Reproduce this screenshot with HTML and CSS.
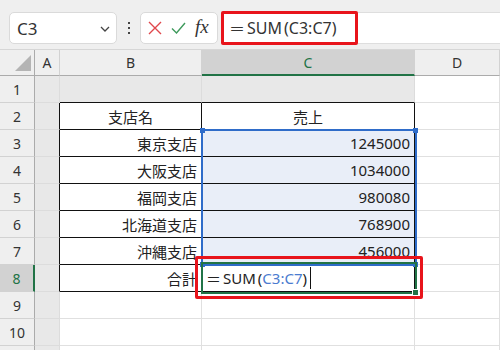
FILE: index.html
```html
<!DOCTYPE html>
<html lang="ja">

<head>
    <meta charset="UTF-8">
    <title>SUM関数</title>
    <link rel="stylesheet" href="styles.css">
</head>

<body>
    <div class="topbar">
        <div class="namebox">
            <span>C3</span>
            <svg class="chevron" width="10" height="6" viewBox="0 0 10 6"><path d="M1 1 L5 5 L9 1" fill="none" stroke="#444" stroke-width="1.3"/></svg>
        </div>
        <div class="dots"><i></i><i></i><i></i></div>
        <div class="fxbox">
            <svg width="14" height="14" viewBox="0 0 14 14"><path d="M1 1 L13 13 M13 1 L1 13" stroke="#e0474c" stroke-width="1.4"/></svg>
            <svg width="15" height="12" viewBox="0 0 15 12"><path d="M1 6.5 L5.5 11 L14 1" fill="none" stroke="#3e9a5c" stroke-width="1.4"/></svg>
            <span class="fx">fx</span>
        </div>
        <div class="formula">
            <span class="formula-text"><span class="eq">＝</span>SUM<span class="paren">(</span>C3:C7)</span>
        </div>
    </div>

    <div class="sheet">
        <div class="ch corner"><span class="tri"></span></div>
        <div class="ch">A</div>
        <div class="ch">B</div>
        <div class="ch active">C</div>
        <div class="ch">D</div>

        <div class="rh">1</div>
        <div class="cell shade"></div>
        <div class="cell shade top-edge"></div>
        <div class="cell shade top-edge"></div>
        <div class="cell"></div>

        <div class="rh">2</div>
        <div class="cell shade left-edge"></div>
        <div class="cell tb center">支店名</div>
        <div class="cell tb center">売上</div>
        <div class="cell"></div>

        <div class="rh">3</div>
        <div class="cell shade left-edge"></div>
        <div class="cell tb right">東京支店</div>
        <div class="cell tb sel right">1245000</div>
        <div class="cell"></div>

        <div class="rh">4</div>
        <div class="cell shade left-edge"></div>
        <div class="cell tb right">大阪支店</div>
        <div class="cell tb sel right">1034000</div>
        <div class="cell"></div>

        <div class="rh">5</div>
        <div class="cell shade left-edge"></div>
        <div class="cell tb right">福岡支店</div>
        <div class="cell tb sel right">980080</div>
        <div class="cell"></div>

        <div class="rh">6</div>
        <div class="cell shade left-edge"></div>
        <div class="cell tb right">北海道支店</div>
        <div class="cell tb sel right">768900</div>
        <div class="cell"></div>

        <div class="rh">7</div>
        <div class="cell shade left-edge"></div>
        <div class="cell tb right">沖縄支店</div>
        <div class="cell tb sel right">456000</div>
        <div class="cell"></div>

        <div class="rh active">8</div>
        <div class="cell shade left-edge"></div>
        <div class="cell tb right">合計</div>
        <div class="cell tb editing"><span class="eq">＝</span>SUM<span class="paren">(</span><span class="ref">C3:C7</span>)<span class="caret"></span></div>
        <div class="cell"></div>

        <div class="rh">9</div>
        <div class="cell shade"></div>
        <div class="cell"></div>
        <div class="cell"></div>
        <div class="cell"></div>

        <div class="rh">10</div>
        <div class="cell shade"></div>
        <div class="cell"></div>
        <div class="cell"></div>
        <div class="cell"></div>

        <div class="rh"></div>
        <div class="cell shade"></div>
        <div class="cell"></div>
        <div class="cell"></div>
        <div class="cell"></div>

        <!-- range highlight, active cell and callout drawn over the grid -->
        <div class="range"></div>
        <div class="handle blue h1"></div>
        <div class="handle blue h2"></div>
        <div class="handle blue h3"></div>
        <div class="handle blue h4"></div>
        <div class="activecell"></div>
        <div class="handle green h5"></div>
        <div class="callout"></div>
    </div>
</body>

</html>
```

FILE: styles.css
```css
body {
    margin: 0;
    width: 500px;
    height: 350px;
    overflow: hidden;
    background-color: #fff;
    font-family: "Noto Sans", "Noto Sans CJK JP", sans-serif;
    color: #222;
}

.topbar {
    height: 50px;
    background-color: #efefef;
    border-bottom: 1px solid #d6d6d6;
    display: flex;
    align-items: flex-start;
    padding-top: 12px;
    box-sizing: border-box;
}

.namebox {
    margin-left: 9px;
    width: 108px;
    height: 32px;
    box-sizing: border-box;
    background-color: #fff;
    border: 1px solid #dadada;
    border-radius: 5px;
    display: flex;
    align-items: center;
    justify-content: space-between;
    padding: 0 6px 0 7px;
    font-size: 17px;
    color: #333;
}

.chevron {
    margin-top: 1px;
}

.dots {
    width: 23px;
    height: 32px;
    display: flex;
    flex-direction: column;
    align-items: center;
    justify-content: center;
    gap: 3px;
}

.dots i {
    width: 2px;
    height: 2px;
    background-color: #444;
}

.fxbox {
    width: 78px;
    height: 32px;
    box-sizing: border-box;
    background-color: #fff;
    border: 1px solid #dadada;
    border-radius: 5px;
    display: flex;
    align-items: center;
    gap: 9px;
    padding-left: 7px;
}

.fx {
    font-family: "Liberation Serif", serif;
    font-style: italic;
    font-size: 19px;
    color: #333;
    margin-top: -3px;
}

.formula {
    flex: 1;
    margin-left: 3px;
    height: 32px;
    background-color: #fff;
    border-top: 1px solid #dedede;
    border-bottom: 1px solid #dedede;
    box-sizing: border-box;
}

.formula-text {
    display: flex;
    align-items: center;
    width: 137px;
    height: 34px;
    margin-top: -2px;
    box-sizing: border-box;
    border: 3px solid #e8141b;
    border-radius: 2px;
    padding-left: 5px;
    font-size: 16px;
    color: #333;
}

.eq {
    font-family: "Noto Sans CJK JP", sans-serif;
    margin-right: 2px;
}

.paren {
    margin-left: 2px;
}

.sheet {
    position: relative;
    display: grid;
    grid-template-columns: 35px 25px 142px 213px 85px;
    grid-template-rows: 26px repeat(11, 27px);
}

.sheet > div {
    box-sizing: border-box;
}

.ch {
    background-color: #efefef;
    border-right: 1px solid #d2d2d2;
    border-bottom: 1px solid #ababab;
    display: flex;
    align-items: center;
    justify-content: center;
    font-size: 14px;
    color: #333;
}

.ch.active {
    background-color: #d2d2d2;
    border-bottom: 2px solid #217346;
    color: #217346;
}

.corner {
    position: relative;
    border-right: 1px solid #ababab;
}

.tri {
    position: absolute;
    right: 3px;
    bottom: 4px;
    width: 0;
    height: 0;
    border-left: 16px solid transparent;
    border-bottom: 16px solid #b4b4b4;
}

.rh {
    background-color: #efefef;
    border-right: 1px solid #ababab;
    border-bottom: 1px solid #d2d2d2;
    display: flex;
    align-items: center;
    justify-content: center;
    font-size: 14px;
    color: #333;
}

.rh.active {
    background-color: #d2d2d2;
    border-right: 2px solid #217346;
    color: #217346;
}

.cell {
    border-right: 1px solid #e0e0e0;
    border-bottom: 1px solid #e0e0e0;
    display: flex;
    align-items: center;
    padding: 0 4px;
    font-size: 15px;
    white-space: nowrap;
}

.shade {
    background-color: #e8e8e8;
    border-color: #dcdcdc;
}

.top-edge {
    border-bottom-color: #111;
}

.left-edge {
    border-right-color: #111;
}

.tb {
    border-right-color: #111;
    border-bottom-color: #111;
}

.center {
    justify-content: center;
}

.right {
    justify-content: flex-end;
}

.sel {
    background-color: #e9eef8;
}

.editing {
    padding-left: 4px;
}

.ref {
    color: #4a7bd0;
}

.caret {
    width: 1px;
    height: 22px;
    margin-left: 3px;
    background-color: #111;
}

.range {
    position: absolute;
    left: 201px;
    top: 79px;
    width: 216px;
    height: 137px;
    border: 2px solid #2f6cc9;
    box-sizing: border-box;
}

.activecell {
    position: absolute;
    left: 201px;
    top: 212px;
    width: 216px;
    height: 32px;
    border: 2px solid #217346;
    box-sizing: border-box;
}

.handle {
    position: absolute;
    width: 5px;
    height: 5px;
}

.blue {
    background-color: #2f6cc9;
}

.green {
    background-color: #217346;
    outline: 1px solid #fff;
}

.h1 { left: 200px; top: 78px; }
.h2 { left: 413px; top: 78px; }
.h3 { left: 200px; top: 212px; }
.h4 { left: 413px; top: 212px; }
.h5 { left: 413px; top: 240px; }

.callout {
    position: absolute;
    left: 195px;
    top: 206px;
    width: 228px;
    height: 43px;
    border: 3px solid #e8141b;
    border-radius: 2px;
    box-sizing: border-box;
}
```
